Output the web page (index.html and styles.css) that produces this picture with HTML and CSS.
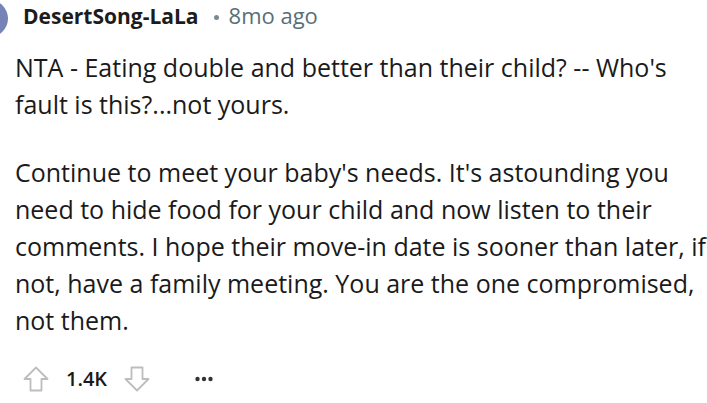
FILE: index.html
```html
<!DOCTYPE html>
<html>
<head>
<meta charset="utf-8">
<link rel="stylesheet" href="styles.css">
</head>
<body>
<div class="comment">
  <div class="head">
    <div class="avatar"></div>
    <div class="meta">
      <span class="user">DesertSong-LaLa</span>
      <span class="dot"></span>
      <span class="time">8mo ago</span>
    </div>
  </div>
  <div class="body">
    <p>NTA - Eating double and better than their child? -- Who's fault is this?...not yours.</p>
    <p>Continue to meet your baby's needs. It's astounding you need to hide food for your child and now listen to their comments. I hope their move-in date is sooner than later, if not, have a family meeting. You are the one compromised, not them.</p>
  </div>
  <div class="actions">
    <svg class="arrow" width="26" height="26" viewBox="0 0 26 26"><path d="M13 1.5 L1.5 13 H7.5 V24.5 H18.5 V13 H24.5 Z" fill="none" stroke="#bdbdbd" stroke-width="1.8" stroke-linejoin="round"/></svg>
    <span class="score">1.4K</span>
    <svg class="arrow" width="26" height="26" viewBox="0 0 26 26"><path d="M13 24.5 L1.5 13 H7.5 V1.5 H18.5 V13 H24.5 Z" fill="none" stroke="#bdbdbd" stroke-width="1.8" stroke-linejoin="round"/></svg>
    <svg class="more" width="18" height="6" viewBox="0 0 18 6"><circle cx="2.5" cy="3" r="2.2" fill="#333"/><circle cx="9" cy="3" r="2.2" fill="#333"/><circle cx="15.5" cy="3" r="2.2" fill="#333"/></svg>
  </div>
</div>
</body>
</html>
```
FILE: styles.css
```css
html, body { margin: 0; padding: 0; background: #fff; }
body { font-family: "Open Sans", "Noto Sans", sans-serif; color: #1a1a1b; overflow: hidden; }
.comment { width: 707px; }
.head { display: flex; align-items: flex-start; height: 36px; }
.avatar { width: 37px; height: 37px; border-radius: 50%; background: #7583b6; margin-left: -29px; margin-right: 15px; flex: none; }
.meta { display: flex; align-items: baseline; line-height: 30px; }
.user { font-weight: 700; font-size: 21px; color: #1c1c1c; }
.dot { width: 5px; height: 5px; border-radius: 50%; background: #7c8a90; margin-left: 15px; margin-right: 10px; align-self: center; margin-top: 4px; }
.time { color: #576f76; font-size: 22px; }
.body { padding-left: 15px; margin-top: 13px; font-size: 25px; line-height: 37px; letter-spacing: 0; }
.body p { margin: 0; }
.body p + p { margin-top: 31px; }
.actions { display: flex; align-items: center; padding-left: 23px; margin-top: 27px; }
.arrow { display: block; flex: none; }
.score { font-size: 20px; font-weight: 600; margin-left: 17px; margin-right: 17px; line-height: 26px; }
.more { display: block; margin-left: 45px; }
```
